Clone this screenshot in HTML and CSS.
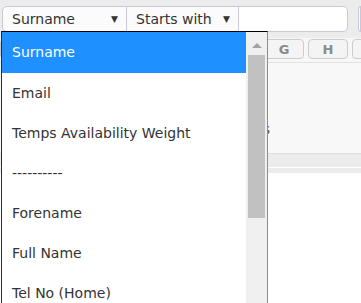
FILE: index.html
```html
<!DOCTYPE html>
<html lang="en">
<head>
    <meta charset="UTF-8">
    <title>Search</title>
    <link rel="stylesheet" href="styles.css">
</head>
<body>
    <div class="toolbar">
        <div class="filter">
            <div class="select field-select"><span>Surname</span><span class="caret">&#9660;</span></div>
            <div class="select op-select"><span>Starts with</span><span class="caret">&#9660;</span></div>
            <input class="term" type="text">
        </div>
        <span class="cursor-line"></span>
        <div class="next-box"></div>
    </div>

    <div class="letters">
        <button class="letter">A</button>
        <button class="letter">B</button>
        <button class="letter">C</button>
        <button class="letter">D</button>
        <button class="letter">E</button>
        <button class="letter">F</button>
        <button class="letter">G</button>
        <button class="letter">H</button>
        <button class="letter">I</button>
    </div>

    <div class="panel">
        <span class="hint">Enter a value to search for candidates</span>
    </div>
    <div class="strip"></div>
    <div class="strip strip-low"></div>

    <!-- open field list -->
    <div class="dropdown">
        <ul class="options">
            <li class="option selected">Surname</li>
            <li class="option">Email</li>
            <li class="option">Temps Availability Weight</li>
            <li class="option">----------</li>
            <li class="option">Forename</li>
            <li class="option">Full Name</li>
            <li class="option">Tel No (Home)</li>
        </ul>
        <div class="scrollbar">
            <div class="arrow-up"></div>
            <div class="thumb"></div>
        </div>
    </div>
</body>
</html>
```

FILE: styles.css
```css
body {
    margin: 0;
    font-family: 'DejaVu Sans', Verdana, sans-serif;
    font-size: 14px;
    color: #333333;
    background: #ffffff;
    overflow: hidden;
}

.toolbar {
    display: flex;
    align-items: center;
    height: 38px;
    padding: 6px 0 0 2px;
    box-sizing: border-box;
    background: #ececec;
}

.filter {
    display: flex;
    height: 26px;
    align-self: flex-start;
}

.select {
    display: flex;
    align-items: center;
    justify-content: space-between;
    box-sizing: border-box;
    height: 26px;
    padding: 0 8px 0 9px;
    background: #fbfbfb;
    border: 1px solid #c9c9d6;
    color: #333333;
}

.field-select {
    width: 125px;
    border-radius: 5px 0 0 5px;
}

.op-select {
    width: 112px;
    border-left: none;
}

.caret {
    font-size: 9px;
    color: #333333;
}

.term {
    width: 109px;
    height: 26px;
    box-sizing: border-box;
    margin: 0;
    border: 1px solid #c9c9d6;
    border-left: none;
    border-radius: 0 5px 5px 0;
    background: #ffffff;
}

.cursor-line {
    width: 1px;
    height: 17px;
    margin: 0 0 6px 5px;
    background: #8fc3f0;
}

.next-box {
    width: 20px;
    height: 26px;
    margin: 0 0 6px 5px;
    box-sizing: border-box;
    border: 1px solid #c9c9d6;
    border-radius: 5px 0 0 5px;
    background: #fbfbfb;
}

.letters {
    display: flex;
    gap: 4px;
    height: 24px;
    padding: 1px 0 0 0;
    box-sizing: border-box;
    background: #f7f7f7;
}

.letter {
    flex: none;
    width: 40px;
    height: 20px;
    padding: 0;
    border: 1px solid #cccccc;
    border-radius: 4px;
    background: #f4f4f4;
    font: bold 13px 'DejaVu Sans', sans-serif;
    color: #8b8b8b;
}

.panel {
    height: 91px;
    padding: 58px 0 0 0;
    box-sizing: border-box;
    background: #f8f8f8;
    border-top: 1px solid #e2e2e2;
}

.hint {
    display: block;
    width: 270px;
    text-align: right;
    font-size: 14px;
    color: #555555;
}

.strip {
    height: 13px;
    background: #ececec;
    border-top: 1px solid #dedede;
}

.strip-low {
    height: 5px;
    margin-top: 1px;
    border-top: none;
}

.dropdown {
    position: absolute;
    top: 31px;
    left: 1px;
    display: flex;
    width: 267px;
    height: 290px;
    box-sizing: border-box;
    background: #ffffff;
    border: 1px solid #000000;
    border-left-color: #1d2a66;
    border-right-color: #6f8fcb;
}

.options {
    flex: 1;
    margin: 0;
    padding: 0;
    list-style: none;
}

.option {
    height: 40px;
    line-height: 40px;
    padding-left: 10px;
    white-space: nowrap;
    color: #333333;
}

.option.selected {
    height: 41px;
    line-height: 41px;
    background: #1e90ff;
    color: #ffffff;
}

.scrollbar {
    width: 21px;
    padding: 0 2px;
    box-sizing: border-box;
    background: #f0f0f0;
}

.arrow-up {
    width: 0;
    height: 0;
    margin: 11px auto 7px auto;
    border-left: 5px solid transparent;
    border-right: 5px solid transparent;
    border-bottom: 5px solid #a3a3a3;
}

.thumb {
    height: 163px;
    background: #c1c1c1;
}
```
